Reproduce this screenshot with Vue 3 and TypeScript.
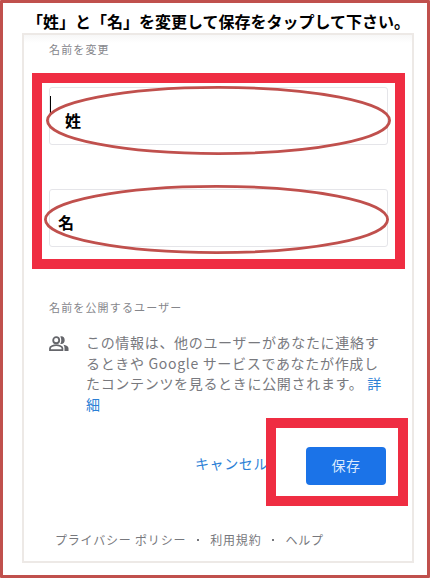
<script setup lang="ts">
interface Field {
  id: string
  label: string
}

const fields: Field[] = [
  { id: 'family', label: '姓' },
  { id: 'given', label: '名' },
]
const description: string[] = [
  'この情報は、他のユーザーがあなたに連絡す',
  'るときや Google サービスであなたが作成し',
]
</script>

<template>
  <main class="guide">
    <h1 class="title">「姓」と「名」を変更して保存をタップして下さい。</h1>
    <section class="panel">
      <h2 class="caption">名前を変更</h2>
      <div class="frame">
        <div v-for="field in fields" :key="field.id" class="field" :class="field.id">
          <span v-if="field.id === 'family'" class="caret"></span>
          <svg class="ring" width="345" height="69" viewBox="0 0 345 69">
            <ellipse cx="172.5" cy="34.5" rx="171.1" ry="33.1" />
          </svg>
          <span class="name">{{ field.label }}</span>
        </div>
      </div>

      <h2 class="caption audience">名前を公開するユーザー</h2>
      <div class="info">
        <svg class="people" width="20" height="16" viewBox="0 0 20 16">
          <circle cx="7.2" cy="4.2" r="3" />
          <path d="M1 14.2v-2c0-1.9 3.8-3 6.2-3s6.2 1.1 6.2 3v2z" />
          <path class="solid" d="M11.3.5c2.4-.8 4.4 1.1 4.4 3.7s-2 4.5-4.4 3.7c1.3-2 1.3-5.4 0-7.4zM14.3 8.8c3.2.5 5.2 1.7 5.2 3.5V15h-4v-2.8c0-1.4-.3-2.4-1.2-3.4z" />
        </svg>
        <p class="text">
          <span v-for="line in description" :key="line" class="line">{{ line }}</span>
          <span class="line">たコンテンツを見るときに公開されます。 <a>詳</a></span>
          <span class="line"><a>細</a></span>
        </p>
      </div>

      <div class="actions">
        <a class="cancel">キャンセル</a>
        <div class="save-frame"><button class="save" type="button">保存</button></div>
      </div>

      <footer class="footer">
        <span class="privacy">プライバシー ポリシー</span>
        <span class="dot"></span>
        <span>利用規約</span>
        <span class="dot"></span>
        <span>ヘルプ</span>
      </footer>
    </section>
  </main>
</template>

<style>
body {
  background: #fff;
}
</style>

<style scoped>
* {
  box-sizing: border-box;
}
.guide {
  width: 430px;
  height: 578px;
  padding: 7px 13px 12px 19px;
  border: 3px solid #c0504d;
  border-radius: 1px;
  background: #fff;
  font-family: "Noto Sans CJK JP", sans-serif;
}
.title {
  margin: 0 -10px 0 5px;
  height: 23px;
  font-size: 16px;
  line-height: 22px;
  font-weight: 700;
  color: #000;
  white-space: nowrap;
}
.panel {
  display: flex;
  flex-direction: column;
  width: 392px;
  height: 530px;
  border: 2px solid #ede9e6;
  background: linear-gradient(#f7f7f7, #fff 8px);
}
.caption {
  margin: 6px 0 0 25px;
  height: 16px;
  font-size: 11px;
  line-height: 16px;
  font-weight: 400;
  letter-spacing: 1.15px;
  color: #85868b;
}
.frame {
  width: 373px;
  height: 196px;
  margin: 16px 0 0 8px;
  padding: 4px 7px;
  border: 10px solid #ef2d42;
}
.field {
  position: relative;
  width: 339px;
  height: 58px;
  border: 1px solid #e5e5e9;
  border-radius: 3px;
}
.field + .field {
  margin-top: 44px;
}
.caret {
  position: absolute;
  left: 0;
  top: 8px;
  width: 1px;
  height: 17px;
  background: #000;
}
.ring {
  position: absolute;
  left: -4px;
  top: -2px;
  fill: none;
  stroke: #c0504d;
  stroke-width: 2.8;
}
.given .ring {
  left: -6px;
  top: -5px;
}
.name {
  display: block;
  padding: 21px 0 0 15px;
  font-size: 16px;
  line-height: 22px;
  font-weight: 700;
  color: #000;
}
.given .name {
  padding: 21px 0 0 8px;
}
.audience {
  margin-top: 30px;
}
.info {
  display: flex;
  gap: 17px;
  margin: 17px 0 0 25px;
}
.people {
  flex: none;
  margin-top: 4px;
  fill: none;
  stroke: #65666b;
  stroke-width: 1.8;
}
.people .solid {
  fill: #65666b;
  stroke: none;
}
.text {
  margin: 0;
  font-size: 14px;
  line-height: 20.7px;
  letter-spacing: 0.68px;
  color: #78797e;
  white-space: nowrap;
}
.line {
  display: block;
}
a {
  color: #2b80d6;
}
.actions {
  display: flex;
  align-items: center;
  height: 88px;
  margin-top: 3px;
}
.cancel {
  width: 70px;
  margin-left: 171px;
  padding-top: 2px;
  font-size: 14px;
  line-height: 20px;
  letter-spacing: 0.6px;
  white-space: nowrap;
}
.save-frame {
  position: relative;
  flex: none;
  width: 142px;
  height: 88px;
  margin-left: 1px;
  padding: 19px 0 0 30px;
  border: 10px solid #ef2d42;
  background: #fff;
}
.save {
  display: block;
  width: 80px;
  height: 38px;
  padding: 0 0 1px;
  border: 0;
  border-radius: 4px;
  background: #1b73e8;
  color: #d9e9fd;
  font: 14px/20px "Noto Sans CJK JP", sans-serif;
  letter-spacing: 0.6px;
}
.footer {
  display: flex;
  align-items: center;
  height: 20px;
  margin: 24px 0 0 31px;
  font-size: 12px;
  letter-spacing: 0.8px;
  color: #77787d;
  white-space: nowrap;
}
.dot {
  width: 2px;
  height: 2px;
  margin: 0 11px;
  background: #77787d;
}
</style>
